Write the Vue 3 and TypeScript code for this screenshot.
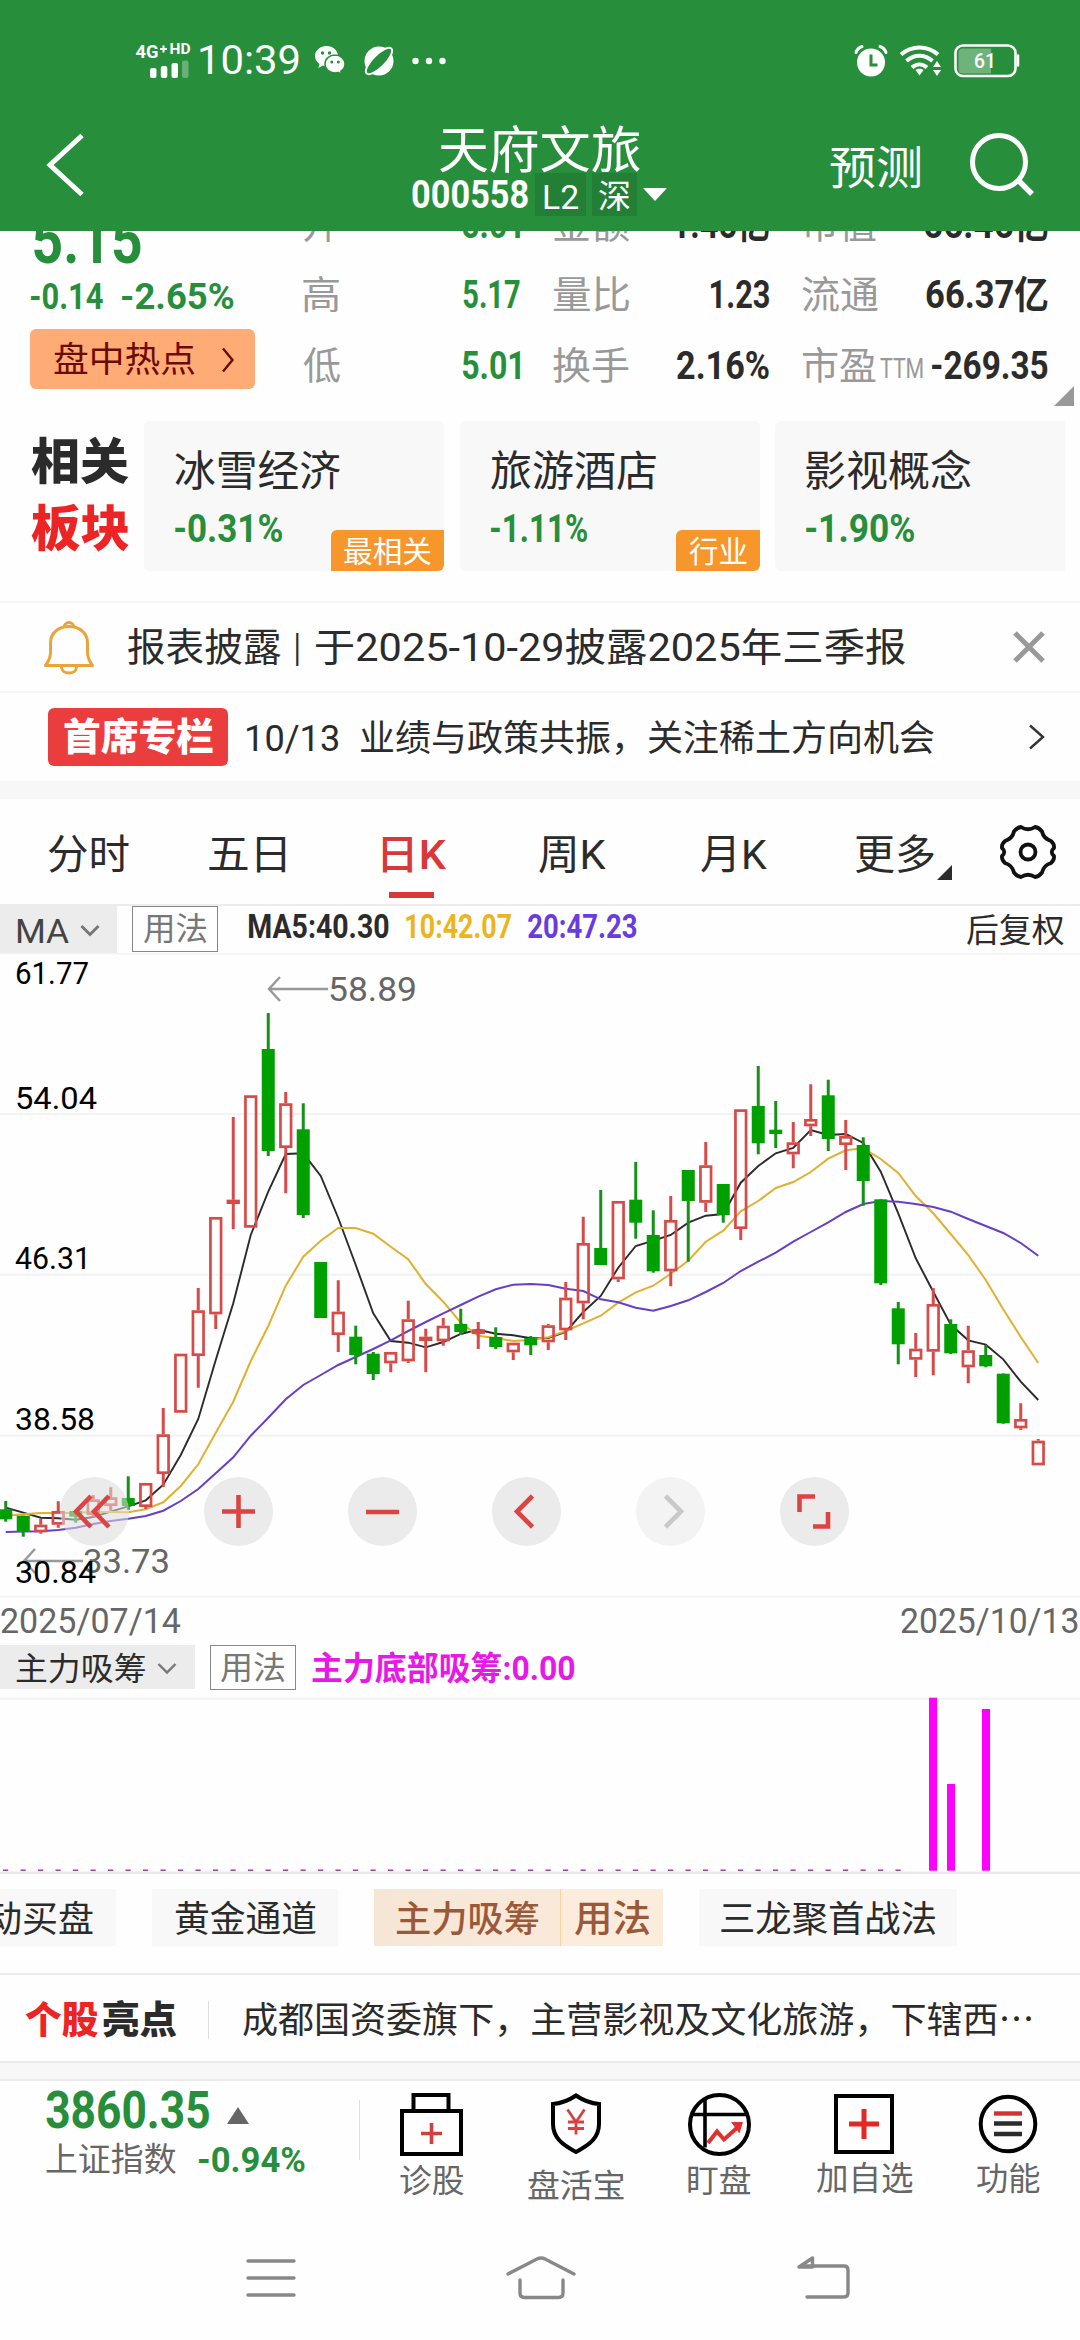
<script setup lang="ts">
import { defineComponent, h, onMounted, ref } from 'vue'

/** A single line of text whose inked width is condensed or stretched to exactly `w` pixels. */
const Fit = defineComponent({
  props: {
    t: { type: String, required: true },
    w: { type: Number, required: true },
    s: { type: Number, required: true },
  },
  setup(props) {
    const el = ref<HTMLElement | null>(null)
    const transform = ref('none')
    onMounted(() => {
      const ctx = document.createElement('canvas').getContext('2d')
      if (!el.value || !ctx) return
      const cs = getComputedStyle(el.value)
      ctx.font = `${cs.fontWeight} ${cs.fontSize} ${cs.fontFamily}`
      const m = ctx.measureText(props.t)
      const scale = props.w / (m.actualBoundingBoxLeft + m.actualBoundingBoxRight)
      transform.value = `translateX(${m.actualBoundingBoxLeft * scale}px) scaleX(${scale})`
    })
    return () =>
      h('span', { class: 'fit', style: { width: `${props.w}px`, height: `${props.s}px`, fontSize: `${props.s}px`, lineHeight: `${props.s}px` } }, [
        h('span', { ref: el, class: 'fit-in', style: { transform: transform.value } }, props.t),
      ])
  },
})

interface Cell { label: string; lw: number; sub?: string; value: string; vw: number; green?: boolean }
const quotes: Cell[] = [
  { label: '开', lw: 36, value: '5.01', vw: 58, green: true },
  { label: '金额', lw: 76, value: '1.45亿', vw: 95 },
  { label: '市值', lw: 74, value: '66.46亿', vw: 124 },
  { label: '高', lw: 36, value: '5.17', vw: 57, green: true },
  { label: '量比', lw: 76, value: '1.23', vw: 58 },
  { label: '流通', lw: 76, value: '66.37亿', vw: 122 },
  { label: '低', lw: 37, value: '5.01', vw: 58, green: true },
  { label: '换手', lw: 76, value: '2.16%', vw: 92 },
  { label: '市盈', lw: 74, sub: 'TTM', value: '-269.35', vw: 116 },
]

const sectors = [
  { name: '冰雪经济', pct: '-0.31%', pw: 107, tag: '最相关', tw: 87 },
  { name: '旅游酒店', pct: '-1.11%', pw: 96, tag: '行业', tw: 58 },
  { name: '影视概念', pct: '-1.90%', pw: 108, tag: '', tw: 0 },
]

const tabs = [
  { name: '分时', w: 81, x: 48 },
  { name: '五日', w: 77, x: 80 },
  { name: '日K', w: 65, x: 96, on: true },
  { name: '周K', w: 67, x: 92 },
  { name: '月K', w: 66, x: 95 },
  { name: '更多', w: 79, x: 88 },
]

const STEP = 17.5
const cx = (i: number) => 5.75 + i * STEP

// direction (1 = rise, 0 = fall), high, body top, body bottom, low
const candles: number[][] = [
  [0, 1501, 1509.3, 1519.3, 1521.7], [0, 1515.7, 1515.7, 1532, 1536.7], [1, 1519, 1524.7, 1532.3, 1533.7],
  [1, 1501.3, 1511, 1524.7, 1527.7], [0, 1510, 1511, 1516.7, 1522.7], [1, 1495, 1499.3, 1515, 1516.7],
  [1, 1487.3, 1497.3, 1506, 1510.7], [0, 1476.3, 1498, 1506, 1510], [1, 1483, 1483, 1507, 1509],
  [1, 1408, 1434.3, 1474, 1487], [1, 1353.7, 1353.7, 1412.7, 1412.7], [1, 1288, 1310.3, 1356, 1387.7],
  [1, 1217, 1217, 1314.3, 1329], [1, 1117, 1199.7, 1204, 1229.3], [1, 1095.3, 1095.3, 1227.7, 1227.7],
  [0, 1013, 1049, 1151, 1156], [1, 1092, 1103.3, 1148, 1193.3], [0, 1103.3, 1129.3, 1215, 1218],
  [0, 1262, 1262, 1318, 1318], [1, 1280.3, 1311.7, 1335, 1352], [0, 1325.7, 1336.7, 1355, 1364.3],
  [0, 1352, 1353.7, 1374, 1380], [1, 1352, 1352, 1363.3, 1372.3], [1, 1300.7, 1319.3, 1361.3, 1363],
  [1, 1328.7, 1336.7, 1341, 1372.3], [1, 1318, 1325.7, 1341.3, 1345.7], [0, 1308.7, 1324, 1332, 1335],
  [1, 1322, 1329.3, 1334, 1349], [0, 1327.3, 1337, 1347, 1349], [1, 1342.7, 1342.7, 1352.3, 1360],
  [0, 1336, 1338, 1345.3, 1355], [1, 1324, 1325.3, 1342.3, 1350], [1, 1282, 1297.7, 1330.3, 1340],
  [1, 1216.7, 1243, 1303.3, 1319.3], [0, 1190, 1248, 1265, 1265], [1, 1201, 1201, 1279.3, 1282],
  [0, 1162, 1199.7, 1222.7, 1238.7], [0, 1210.3, 1235, 1271.3, 1272.7], [1, 1196, 1220, 1271.3, 1286.3],
  [0, 1170, 1170, 1201, 1261.7], [1, 1142, 1165.3, 1202.7, 1212], [0, 1184, 1184, 1215, 1222.7],
  [1, 1109.3, 1109.3, 1229, 1240], [0, 1066, 1106, 1143.3, 1154.3], [0, 1101, 1129.7, 1134, 1148],
  [1, 1122, 1142.3, 1154.3, 1168.3], [1, 1084.3, 1119, 1126.3, 1136], [0, 1079.7, 1095.3, 1139, 1151],
  [1, 1120, 1136, 1145, 1170], [0, 1137.3, 1145, 1181, 1205.7], [0, 1199.3, 1199.3, 1283.3, 1285],
  [0, 1302, 1308.3, 1344.3, 1364.3], [1, 1333, 1348.7, 1359.7, 1377], [1, 1288, 1304, 1351.7, 1375.3],
  [0, 1319.3, 1324, 1353.3, 1354], [1, 1325.7, 1350.3, 1367.3, 1383.3], [0, 1345, 1355, 1366.3, 1367.3],
  [0, 1373.5, 1373.7, 1423.3, 1423.7], [1, 1403.3, 1419, 1428.3, 1430], [1, 1439, 1440.7, 1465.3, 1465.3],
]

const ma5 = [1507.7, 1512.7, 1517.7, 1518.3, 1519.7, 1517, 1511.7, 1506.3, 1500.3, 1484.7, 1455, 1419, 1360, 1303.3, 1235, 1191.7, 1154, 1153.3, 1176, 1218, 1265, 1313.3, 1341, 1342.7, 1347.3, 1342, 1334, 1329.7, 1333.7, 1335.3, 1338.3, 1338, 1332, 1312, 1296, 1267.7, 1246, 1240.7, 1235, 1222.7, 1215.7, 1214, 1182.7, 1166, 1153.3, 1148, 1130, 1135, 1134, 1143, 1171.7, 1213.3, 1258.3, 1291.7, 1324.7, 1340.3, 1344.7, 1359.3, 1381.7, 1400]
const ma10 = [1515.7, 1514.3, 1513, 1513, 1512.7, 1512, 1512, 1512.3, 1509.3, 1502.3, 1486, 1464.3, 1432.7, 1401.7, 1361, 1326, 1285.7, 1256.7, 1240.7, 1228, 1228, 1233.7, 1246.7, 1259.3, 1284, 1301.7, 1322.7, 1335.7, 1338, 1341, 1340, 1337.3, 1331, 1323.3, 1315.7, 1302.7, 1292.3, 1285.7, 1273.7, 1260.7, 1241.7, 1230.7, 1211.3, 1201, 1188, 1182, 1172, 1158.7, 1150.3, 1148.3, 1159, 1173, 1196, 1213.3, 1234, 1255, 1280, 1309.3, 1337, 1363]
const ma20 = [1532, 1531.5, 1531.3, 1530, 1527.7, 1524, 1521, 1518.7, 1516, 1510.7, 1501, 1489, 1473.3, 1457.3, 1435.7, 1417.7, 1399.3, 1385, 1375, 1365, 1357, 1349, 1340.3, 1331, 1322, 1313.3, 1305, 1296.7, 1289.3, 1284.7, 1284, 1285, 1288.7, 1291, 1299.3, 1302.3, 1307.7, 1310.7, 1306, 1300.3, 1292, 1283, 1271, 1261.7, 1252.7, 1241.7, 1232, 1222.3, 1212, 1204, 1201, 1201.7, 1204, 1207, 1211.7, 1219, 1226, 1233, 1243, 1255.7]
const line = (ys: number[]) => ys.map((y, i) => `${cx(i)},${y}`).join(' ')

const axis = [
  { t: '61.77', y: 984, w: 72 },
  { t: '54.04', y: 1108.7, w: 80 },
  { t: '46.31', y: 1269, w: 74 },
  { t: '38.58', y: 1430, w: 78 },
  { t: '30.84', y: 1583, w: 79 },
]
</script>

<template>
  <div class="page">
    <header class="top">
      <div class="status">
        <svg class="net" width="56" height="36" viewBox="135 41 56 36">
          <text x="135.5" y="56" font-size="18.5" font-weight="700" textLength="23" lengthAdjust="spacingAndGlyphs" fill="#fff">4G</text>
          <path d="M160 47h7M163.500 43.500v7" stroke="#fff" stroke-width="2" />
          <text x="169.500" y="52" font-size="14" font-weight="700" textLength="21" lengthAdjust="spacingAndGlyphs" fill="#fff">HD</text>
          <g fill="#fff">
            <rect x="150" y="66" width="6.500" height="10" rx="2" />
            <rect x="160.800" y="64" width="6.500" height="12" rx="2" />
            <rect x="171.500" y="61" width="6.500" height="15" rx="2" />
            <rect x="182" y="58.500" width="6.500" height="17.500" rx="2" opacity=".3" />
          </g>
        </svg>
        <Fit class="clock" t="10:39" :w="99" :s="41" />
        <svg class="wx" width="32" height="32" viewBox="0 0 32 32">
          <path d="M12.500 1C6 1 1 5.500 1 11c0 3.300 1.700 6 4.500 8l-1.200 4 4.400-2.400c1.200.4 2.500.6 3.800.6 6.500 0 11.500-4.500 11.500-10.100S19 1 12.500 1z" fill="#fff" />
          <path d="M21 10c-5.600 0-10 3.900-10 8.900s4.400 9 10 9c1.200 0 2.300-.2 3.300-.5l3.600 2.300-1-3.500c2.500-1.700 4.100-4.300 4.100-7.300 0-5-4.400-8.900-10-8.900z" fill="#fff" stroke="#278e3b" stroke-width="1.500" />
          <g fill="#278e3b"><circle cx="8.500" cy="8" r="1.700" /><circle cx="15.500" cy="8" r="1.700" /><circle cx="17.800" cy="17" r="1.500" /><circle cx="24.300" cy="17" r="1.500" /></g>
        </svg>
        <svg class="planet" width="34" height="32" viewBox="0 0 34 32">
          <circle cx="17" cy="16" r="14.500" fill="#fff" />
          <ellipse cx="17" cy="16" rx="17.500" ry="6.200" transform="rotate(-45 17 16)" fill="#278e3b" stroke="#fff" stroke-width="2" />
        </svg>
        <svg class="more" width="34" height="8" viewBox="0 0 34 8"><g fill="#fff"><circle cx="3.500" cy="4" r="3.200" /><circle cx="17" cy="4" r="3.200" /><circle cx="30.500" cy="4" r="3.200" /></g></svg>
        <svg class="alarm" width="34" height="34" viewBox="0 0 34 34">
          <circle cx="17" cy="18.500" r="14" fill="#fff" />
          <path d="M2 8.500C3 5.500 5 3.500 8 2.500M32 8.500C31 5.500 29 3.500 26 2.500" fill="none" stroke="#fff" stroke-width="3" stroke-linecap="round" />
          <path d="M17 10.500V21h6.500" fill="none" stroke="#278e3b" stroke-width="3" />
        </svg>
        <svg class="wifi" width="44" height="34" viewBox="898 44 44 34">
          <g fill="none" stroke="#fff" stroke-width="4"><path d="M901 54.500c10.500-9.500 26.500-9.500 37 0" /><path d="M906.500 61c7.500-7 18.500-7 26 0" /><path d="M912 67.500c4.500-4 10.500-4 15 0" /></g>
          <path d="M919.500 75.500l-4-5.500c2-1.700 6-1.700 8 0z" fill="#fff" />
          <path d="M937 61l4 6h-8zM937 76l4-6h-8z" fill="#fff" />
        </svg>
        <svg class="batt" width="67" height="36" viewBox="953 42 67 36">
          <rect x="955.500" y="44.500" width="60" height="30.500" rx="7.500" fill="none" stroke="#fff" stroke-width="2.600" />
          <path d="M963 47.500h28v25h-28q-4.500 0-4.500-4.500v-16q0-4.500 4.500-4.500z" fill="#fff" opacity=".33" />
          <path d="M1018 54.500v10" stroke="#fff" stroke-width="2.500" stroke-linecap="round" />
          <text x="974" y="67" font-size="20.500" textLength="22" lengthAdjust="spacingAndGlyphs" fill="#fff" font-weight="500">61</text>
        </svg>
      </div>
      <div class="titlebar">
        <svg class="back" width="40" height="64" viewBox="46 133 40 64"><path d="M82 135.500L50 165l32 29.500" fill="none" stroke="#fff" stroke-width="5" /></svg>
        <div class="title">
          <Fit class="name" t="天府文旅" :w="200.500" :s="50" />
          <div class="code">
            <Fit class="b" t="000558" :w="116" :s="39" />
            <span class="mk l2"><Fit t="L2" :w="34" :s="34" /></span>
            <span class="mk sz"><Fit t="深" :w="31" :s="33" /></span>
            <i class="dn"></i>
          </div>
        </div>
        <Fit class="predict" t="预测" :w="90" :s="46" />
        <svg class="search" width="66" height="66" viewBox="969 132 66 66"><circle cx="999" cy="162" r="26.500" fill="none" stroke="#fff" stroke-width="5" /><path d="M1018 180l14 14" stroke="#fff" stroke-width="5.500" /></svg>
      </div>
    </header>

    <section class="quote">
      <div class="price g">
        <Fit class="now b" t="5.15" :w="107" :s="66" />
        <div class="chg m"><Fit t="-0.14" :w="72" :s="37.500" /><Fit t="-2.65%" :w="112" :s="37.500" /></div>
        <div class="hot">
          <Fit t="盘中热点" :w="141" :s="35" />
          <svg width="14" height="26" viewBox="0 0 14 26"><path d="M2 1.500L11.500 13 2 24.500" fill="none" stroke="#6b0b06" stroke-width="2.400" /></svg>
        </div>
      </div>
      <div class="grid">
        <div v-for="q in quotes" :key="q.label" class="cell">
          <span class="lab"><Fit :t="q.label" :w="q.lw" :s="38" /><Fit v-if="q.sub" class="sub" :t="q.sub" :w="43" :s="27" /></span>
          <Fit class="m" :class="q.green ? 'g' : 'k'" :t="q.value" :w="q.vw" :s="38" />
        </div>
      </div>
      <i class="corner"></i>
    </section>

    <section class="sectors">
      <div class="sect-title"><Fit class="k" t="相关" :w="98" :s="49" /><Fit class="r" t="板块" :w="98" :s="49" /></div>
      <div v-for="s in sectors" :key="s.name" class="card">
        <Fit class="k" :t="s.name" :w="165" :s="42" />
        <Fit class="g m pct" :t="s.pct" :w="s.pw" :s="38.500" />
        <span v-if="s.tag" class="tag"><Fit :t="s.tag" :w="s.tw" :s="30" /></span>
      </div>
    </section>

    <div class="notice">
      <svg class="bell" width="52" height="56" viewBox="43 618 52 56">
        <path d="M64 626.500a5 5 0 0 1 10 0" fill="none" stroke="#eba43a" stroke-width="3" />
        <path d="M45.500 664.500h47c-3-4-5-7-5-13V642c0-9.500-7.500-16.500-18.500-16.500S50.500 632.500 50.500 642v9.500c0 6-2 9-5 13z" fill="none" stroke="#eba43a" stroke-width="3" stroke-linejoin="round" />
        <path d="M61.500 666c0 8 15 8 15 0" fill="none" stroke="#eba43a" stroke-width="3" />
      </svg>
      <div class="report k">
        <Fit t="报表披露" :w="153" :s="38.500" />
        <Fit class="bar" t="|" :w="3" :s="38" />
        <Fit t="于2025-10-29披露2025年三季报" :w="590" :s="38.500" />
      </div>
      <svg class="close" width="32" height="32" viewBox="0 0 32 32"><path d="M2 2l28 28M30 2L2 30" stroke="#999" stroke-width="5" /></svg>
    </div>
    <div class="notice column">
      <span class="chief"><Fit t="首席专栏" :w="149" :s="38" /></span>
      <Fit class="k d1" t="10/13" :w="91.500" :s="37" />
      <Fit class="k d2" t="业绩与政策共振，关注稀土方向机会" :w="573" :s="36" />
      <svg class="go" width="18" height="26" viewBox="0 0 18 26"><path d="M2 1.500L15 13 2 24.500" fill="none" stroke="#333" stroke-width="2.400" /></svg>
    </div>
    <div class="band"></div>

    <nav class="tabs">
      <span v-for="t in tabs" :key="t.name" class="tab" :class="{ on: t.on }" :style="{ marginLeft: t.x + 'px' }"><Fit :t="t.name" :w="t.w" :s="41" /></span>
      <i class="tri"></i>
      <svg class="gear" width="56" height="56" viewBox="-28 -28 56 56">
        <path d="M-7 -25Q0 -20.500 7 -25Q11 -24.500 14 -20.500Q15.500 -13.500 23 -11Q26.500 -8 26 -4Q21.500 0 26 4Q26.500 8 23 11Q15.500 13.500 14 20.500Q11 24.500 7 25Q0 20.500 -7 25Q-11 24.500 -14 20.500Q-15.500 13.500 -23 11Q-26.500 8 -26 4Q-21.500 0 -26 -4Q-26.500 -8 -23 -11Q-15.500 -13.500 -14 -20.500Q-11 -24.500 -7 -25Z" fill="none" stroke="#111" stroke-width="3.800" stroke-linejoin="round" />
        <circle r="7.500" fill="none" stroke="#111" stroke-width="3.800" />
      </svg>
    </nav>

    <div class="tool main">
      <span class="sel"><Fit t="MA" :w="52" :s="34" /><svg width="20" height="13" viewBox="0 0 20 13"><path d="M1.500 2L10 10.500 18.500 2" fill="none" stroke="#777" stroke-width="3" /></svg></span>
      <span class="usage"><Fit t="用法" :w="63" :s="32" /></span>
      <Fit class="b v1 k" t="MA5:40.30" :w="140" :s="32.500" />
      <Fit class="b v2" t="10:42.07" :w="105.500" :s="32.500" />
      <Fit class="b v3" t="20:47.23" :w="109" :s="32.500" />
      <Fit class="adj k" t="后复权" :w="97" :s="32.500" />
    </div>

    <div class="chart">
      <svg class="plot" width="1080" height="645" viewBox="0 953 1080 645">
        <g stroke="#f3f3f3" stroke-width="2"><path d="M0 953.700H1080" stroke-width="1.400" /><path d="M0 1114H1080M0 1274.700H1080M0 1435.700H1080" /><path d="M0 1596.500H1080" stroke-width="1.400" /></g>
        <polyline :points="line(ma5)" fill="none" stroke="#2b2b2b" stroke-width="1.900" />
        <polyline :points="line(ma10)" fill="none" stroke="#e0b030" stroke-width="2" />
        <polyline :points="line(ma20)" fill="none" stroke="#673fc6" stroke-width="2" />
        <g v-for="(c, i) in candles" :key="i">
          <g v-if="c[0]" fill="none" stroke="#d64a48">
            <path :d="`M${cx(i)} ${c[1]}V${c[2]}M${cx(i)} ${c[3]}V${c[4]}`" stroke-width="3" />
            <rect :x="cx(i) - 5.300" :y="c[2] + 1.300" width="10.600" :height="Math.max(c[3] - c[2] - 2.600, 1)" stroke-width="2.700" />
          </g>
          <g v-else>
            <path :d="`M${cx(i)} ${c[1]}V${c[4]}`" stroke="#169016" stroke-width="3" />
            <rect :x="cx(i) - 6.500" :y="c[2]" width="13" :height="c[3] - c[2]" fill="#00a000" />
          </g>
        </g>
        <g fill="none" stroke="#999" stroke-width="2.400"><path d="M328 989H269M280 977L269 989l11 12" /><path d="M83 1561H24M35 1549L24 1561l11 12" /></g>
        <g fill="#666" font-size="34"><text x="328" y="1001" textLength="89" lengthAdjust="spacingAndGlyphs">58.89</text><text x="83" y="1573.300" textLength="87" lengthAdjust="spacingAndGlyphs">33.73</text></g>
        <text v-for="a in axis" :key="a.t" x="15" :y="a.y" :textLength="a.w + 2" lengthAdjust="spacingAndGlyphs" font-size="32" fill="#000">{{ a.t }}</text>
      </svg>
      <div class="ctl">
        <span><svg viewBox="0 0 69 69"><path d="M31 19L16 34.500 31 50M49 19L34 34.500 49 50" /></svg></span>
        <span><svg viewBox="0 0 69 69"><path d="M34.500 18v33M18 34.500h33" /></svg></span>
        <span><svg viewBox="0 0 69 69"><path d="M18 35h33" /></svg></span>
        <span><svg viewBox="0 0 69 69"><path d="M40.500 19L25 34.500 40.500 50" /></svg></span>
        <span class="off"><svg viewBox="0 0 69 69"><path d="M29.500 19L45 34.500 29.500 50" /></svg></span>
        <span><svg viewBox="0 0 69 69"><path d="M35 19.500H19.500V35M33 49.500h15V35" stroke-width="4.800" /></svg></span>
      </div>
    </div>

    <div class="dates"><Fit t="2025/07/14" :w="179.500" :s="34.500" /><Fit t="2025/10/13" :w="177" :s="34.500" /></div>

    <div class="tool second">
      <span class="sel"><Fit class="k" t="主力吸筹" :w="129.500" :s="32" /><svg width="20" height="13" viewBox="0 0 20 13"><path d="M1.500 2L10 10.500 18.500 2" fill="none" stroke="#777" stroke-width="2.400" /></svg></span>
      <span class="usage"><Fit t="用法" :w="64" :s="32" /></span>
      <Fit class="b v4" t="主力底部吸筹:0.00" :w="263" :s="32.500" />
    </div>
    <svg class="subplot" width="1080" height="185" viewBox="0 1690 1080 185">
      <path d="M0 1698.700H1080" stroke="#f3f3f3" stroke-width="2" />
      <path d="M0 1872.700H1080" stroke="#e9e9e9" stroke-width="2.600" />
      <path d="M3 1870.300H903" stroke="#a63ca6" stroke-width="1.500" stroke-dasharray="5.200 12.300" />
      <g fill="#f0f"><rect x="929" y="1697.700" width="8" height="173" /><rect x="947" y="1784" width="8" height="86.700" /><rect x="982" y="1709" width="8" height="161.700" /></g>
    </svg>

    <div class="chips">
      <span class="chip c1"><Fit t="主动买盘" :w="141" :s="36" /></span>
      <span class="chip c2"><Fit t="黄金通道" :w="141" :s="36" /></span>
      <span class="chip c3"><Fit t="主力吸筹" :w="143" :s="36" /></span>
      <span class="chip c4"><Fit t="用法" :w="75" :s="37" /></span>
      <span class="chip c5"><Fit t="三龙聚首战法" :w="214" :s="36" /></span>
    </div>

    <div class="light">
      <span class="lt"><Fit class="r" t="个股" :w="73.500" :s="38" /><Fit class="k" t="亮点" :w="74" :s="38" /></span>
      <i></i>
      <Fit class="k cjk" t="成都国资委旗下，主营影视及文化旅游，下辖西…" :w="788.500" :s="36" />
    </div>
    <div class="band low"></div>

    <footer class="foot">
      <div class="index">
        <div class="row g b"><Fit t="3860.35" :w="163.500" :s="51" /><i></i></div>
        <div class="row2"><Fit t="上证指数" :w="130" :s="32.500" /><Fit class="g m" t="-0.94%" :w="107" :s="35" /></div>
      </div>
      <i class="sep"></i>
      <div class="act a1">
        <svg width="63" height="63" viewBox="0 0 63 63"><path d="M13.500 18V2h35v16M2 18h59v43H2z" fill="none" stroke="#000" stroke-width="4" /><path d="M31.500 30v21M21 40.500h21" stroke="#d04040" stroke-width="3.600" /></svg>
        <Fit t="诊股" :w="63.500" :s="32" />
      </div>
      <div class="act a2">
        <svg width="52" height="61" viewBox="0 0 52 61"><path d="M26 2.500Q37 10 49 11v20c0 14-10 21-23 28C13 52 3 45 3 31V11q12-1 23-8.500z" fill="none" stroke="#000" stroke-width="4" /><path d="M17.500 16.500L26 29l8.500-12.500M26 28v13.500M18 29h16M18 35.500h16" fill="none" stroke="#d94040" stroke-width="2.800" /></svg>
        <Fit t="盘活宝" :w="95.500" :s="32" />
      </div>
      <div class="act a3">
        <svg width="63" height="63" viewBox="0 0 63 63"><circle cx="31.500" cy="31.500" r="29.500" fill="none" stroke="#000" stroke-width="4" /><path d="M2.500 21.500h58M17 5.500v49" stroke="#000" stroke-width="3.600" /><path d="M20 50l9-11.500 7 8L50 34" fill="none" stroke="#e03030" stroke-width="4" /><path d="M43 29h12l-3.500 11.500z" fill="#e03030" /></svg>
        <Fit t="盯盘" :w="62.500" :s="32" />
      </div>
      <div class="act a4">
        <svg width="60" height="60" viewBox="0 0 60 60"><rect x="2" y="2" width="56" height="56" fill="none" stroke="#000" stroke-width="4" /><path d="M30 15v30M15 30h30" stroke="#e32727" stroke-width="5" /></svg>
        <Fit t="加自选" :w="97" :s="32.500" />
      </div>
      <div class="act a5">
        <svg width="60" height="60" viewBox="0 0 60 60"><circle cx="30" cy="30" r="27.300" fill="none" stroke="#000" stroke-width="4" /><path d="M16 19.500h28" stroke="#d83030" stroke-width="4.400" /><path d="M16 29.500h28M16 40h28" stroke="#2b2b2b" stroke-width="4.400" /></svg>
        <Fit t="功能" :w="62.500" :s="32" />
      </div>
    </footer>

    <div class="sysnav">
      <svg width="50" height="42" viewBox="246 2256 50 42"><path d="M248 2260h46M248 2277h46M248 2294h46" /></svg>
      <svg class="home" width="70" height="46" viewBox="506 2254 70 46"><path d="M508 2273l29-15q4-2 8 0l29 15M520 2279v13q0 4.500 4.500 4.500h34q4.500 0 4.500-4.500v-13" /></svg>
      <svg class="ret" width="52" height="44" viewBox="797 2253 52 44"><path d="M802 2263h42q4 0 4 4v23q0 4-4 4h-37" /><path d="M799 2264l13.500-9v9z" fill="#888" /></svg>
    </div>
  </div>
</template>

<style>
body { margin: 0; background: #fefefe; }
.fit { display: block; flex: none; white-space: pre; }
.fit-in { display: inline-block; transform-origin: 0 50%; vertical-align: top; }
</style>

<style scoped>
.page { width: 1080px; height: 2340px; overflow: hidden; background: #fefefe; color: #666; font-family: Roboto, "Noto Sans CJK SC", sans-serif; }
.page svg { display: block; flex: none; overflow: visible; }
.page i { display: block; flex: none; }
.page div { box-sizing: border-box; }
.cjk { font-family: "Noto Sans CJK SC", sans-serif; }
.b { font-weight: 700; }
.m { font-weight: 700; }
.g { color: #278e3b; }
.k { color: #2b2b2b; }
.r { color: #ec2424; }

.top { height: 231px; background: #278e3b; color: #fff; overflow: hidden; }
.status { height: 121px; padding: 0 60px 0 135px; display: flex; align-items: center; }
.clock { margin-left: 9px; }
.wx { margin-left: 15px; }
.planet { margin-left: 16px; }
.more { margin-left: 16px; }
.alarm { margin-left: auto; }
.wifi { margin-left: 10px; }
.batt { margin-left: 11px; }
.titlebar { height: 110px; display: flex; align-items: flex-start; }
.back { margin: 12px 0 0 46px; }
.title { margin-left: 326px; width: 230px; }
.name { margin: 5px 0 0 28px; }
.code { display: flex; align-items: center; height: 43px; margin-top: -3px; }
.code .b { margin-top: 2px; }
.mk { background: #237f35; height: 43px; display: flex; align-items: center; justify-content: center; flex: none; padding-top: 4px; box-sizing: border-box; }
.l2 { width: 51px; margin-left: 7px; }
.sz { width: 45px; margin-left: 6px; }
.dn { border: 12.5px solid transparent; border-top: 13px solid #fff; border-bottom: 0; margin-left: 6px; }
.predict { margin: 24px 0 0 188px; }
.search { margin: 11px 0 0 49px; }

.quote { height: 190px; overflow: hidden; display: flex; position: relative; }
.price { width: 303px; padding-left: 30px; margin-top: -42px; }
.now { margin: 19px 0 0 4px; }
.chg { display: flex; gap: 19px; margin: 4px 0 14px 1px; height: 37px; }
.hot { width: 225px; height: 60px; border-radius: 6px; background: #ffab75; color: #6b0b06; display: flex; align-items: center; padding: 2px 0 0 24px; gap: 26px; }
.grid { margin-top: -41px; display: grid; grid-template-columns: 217px 216px 246px; column-gap: 33px; grid-auto-rows: 70.3px; flex: none; height: 212px; }
.cell { display: flex; align-items: center; justify-content: space-between; }
.lab { display: flex; align-items: center; color: #999; }
.sub { margin: 8px 0 0 4px; }
.corner { position: absolute; right: 6px; top: 155px; border-left: 20px solid transparent; border-bottom: 20px solid #999; }

.sectors { display: flex; height: 180px; width: 1065px; overflow: hidden; }
.sect-title { width: 144px; flex: none; padding: 17px 0 0 31px; font-weight: 900; }
.sect-title .r { margin-top: 18px; }
.card { width: 300px; height: 150px; flex: none; margin-right: 15.5px; background: #f8f8f8; border-radius: 6px; padding: 30px 0 0 31px; position: relative; }
.pct { margin-top: 17px; }
.tag { position: absolute; right: 0; bottom: 0; height: 41px; padding: 2px 13px 0; box-sizing: border-box; display: flex; align-items: center; background: #f7962b; color: #fff; border-radius: 6px 0 6px 0; }

.notice { height: 90px; border-top: 2px solid #f5f5f5; display: flex; align-items: center; }
.bell { margin: 0 33px 0 43px; }
.report { display: flex; align-items: center; width: 778px; padding-top: 2px; }
.bar { margin: 0 16.5px 0 15px; }
.close { margin-left: 107px; }
.chief { width: 180px; height: 58px; margin-left: 48px; border-radius: 6px; background: #ea3d3d; color: #fff; font-weight: 900; display: flex; align-items: center; justify-content: center; }
.d1 { margin: 3px 0 0 19px; }
.d2 { margin: 4px 0 0 22px; }
.go { margin-left: 94px; }
.band { height: 18px; background: #f7f7f7; }

.tabs { height: 107px; box-sizing: border-box; border-bottom: 2px solid #ececec; display: flex; align-items: center; color: #2b2b2b; }
.tab { position: relative; height: 105px; display: flex; align-items: center; padding-top: 7px; box-sizing: border-box; }
.on { color: #d93838; font-weight: 500; }
.on::after { content: ""; position: absolute; left: 7px; bottom: 6px; width: 45px; height: 6px; background: #d93838; }
.tri { border-left: 15px solid transparent; border-bottom: 15px solid #2b2b2b; margin: 42px 0 0 3px; }
.gear { margin-left: 48px; }

.tool { display: flex; align-items: center; height: 47px; }
.sel { height: 47px; width: 117px; background: #ececec; box-sizing: border-box; padding: 2px 0 0 16.5px; display: flex; align-items: center; gap: 11px; color: #444; }
.usage { height: 46px; width: 86px; box-sizing: border-box; border: 1.5px solid #888; margin-left: 15px; display: flex; align-items: center; justify-content: center; color: #777; align-self: flex-start; }
.v1 { margin: -4px 0 0 31px; }
.v2 { margin: -4px 0 0 16.5px; color: #ecb51d; }
.v3 { margin: -4px 0 0 17px; color: #683ce0; }
.adj { margin: 4px 0 0 330px; }

.chart { height: 645px; position: relative; }
.ctl { position: absolute; left: 60px; top: 524px; display: flex; gap: 75px; }
.ctl span { width: 69px; height: 69px; border-radius: 50%; background: rgba(220, 220, 220, .57); }
.ctl path { fill: none; stroke: #dc4444; stroke-width: 4.6; }
.ctl .off { background: #f3f3f3; }
.ctl .off path { stroke: #c9c9c9; }

.dates { height: 47px; display: flex; justify-content: space-between; padding: 6px 2px 0 1px; }
.second { height: 45px; }
.second .sel { height: 44px; width: 195px; align-self: flex-start; gap: 12px; padding: 3px 0 0 15.5px; }
.second .usage { height: 45px; }
.v4 { color: #e619e6; margin: 3px 0 0 16px; }

.chips { height: 98px; display: flex; padding-top: 14px; color: #2b2b2b; }
.chip { height: 57px; display: flex; align-items: center; background: #f8f8f8; flex: none; padding-top: 4px; box-sizing: border-box; }
.c1 { width: 196px; margin-left: -80px; padding-left: 32px; }
.c2 { width: 186px; margin-left: 36px; padding-left: 23px; }
.c3 { width: 187px; margin-left: 36px; padding-left: 22px; background: linear-gradient(90deg, #f6e6d6, #fae9d9); color: #99593a; font-weight: 500; border-right: 1px solid #f7d3a0; }
.c4 { width: 102px; padding-left: 14px; background: #fbecdc; color: #99593a; font-weight: 500; }
.c5 { width: 258px; margin-left: 36px; padding-left: 22px; }

.light { height: 88px; border-top: 2px solid #ececec; display: flex; align-items: center; padding-top: 3px; }
.lt { display: flex; gap: 4px; margin-left: 25px; font-weight: 900; width: 183px; }
.light .cjk { margin-top: -5px; }
.light i { width: 1px; height: 38px; background: #ddd; margin-right: 34px; }
.low { height: 20px; box-sizing: border-box; border-top: 2px solid #eaeaea; border-bottom: 2px solid #eaeaea; }

.foot { height: 134px; display: flex; align-items: flex-start; }
.index { width: 359px; padding: 4px 0 0 46px; }
.row { display: flex; align-items: center; }
.row i { border: 11.5px solid transparent; border-bottom: 17px solid #666; border-top: 0; margin: 10px 0 0 17px; }
.row2 { display: flex; align-items: center; gap: 22px; margin-top: 7px; }
.sep { width: 1px; height: 60px; background: #ddd; margin-top: 19px; }
.act { display: flex; flex-direction: column; align-items: center; width: 100px; padding-top: 12px; gap: 9px; flex: none; }
.a1 { margin-left: 21.5px; }
.a2 { margin-left: 44px; gap: 16px; }
.a3 { margin-left: 44px; }
.a4 { margin-left: 44.5px; padding-top: 13px; }
.a5 { margin-left: 44px; padding-top: 13px; }

.sysnav { display: flex; align-items: center; height: 125px; padding-left: 246px; }
.sysnav path { fill: none; stroke: #888; stroke-width: 3.4; stroke-linecap: round; stroke-linejoin: round; }
.home { margin-left: 210px; }
.ret { margin-left: 221px; }
</style>
